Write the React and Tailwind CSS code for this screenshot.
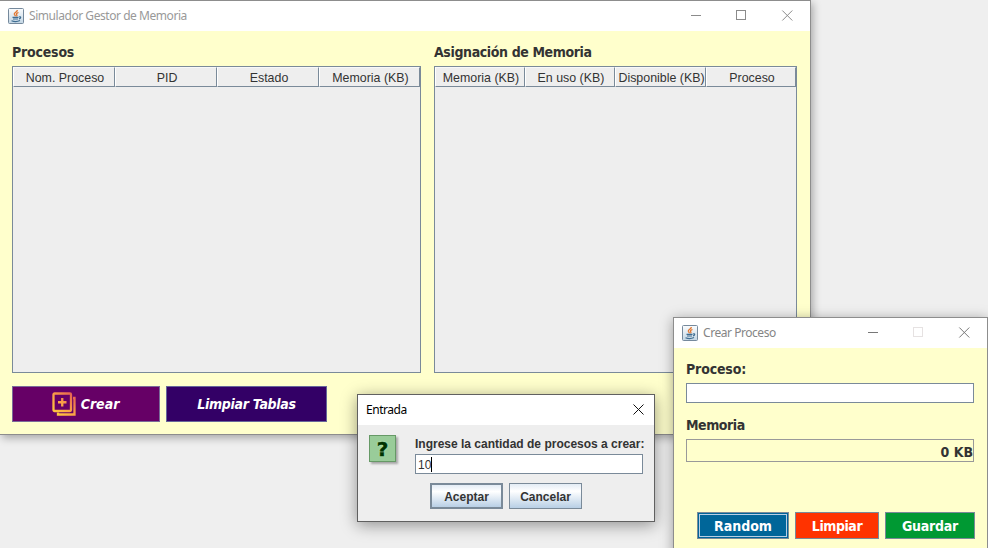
import React from "react";

const tahoma = "font-['DejaVu_Sans_Condensed','DejaVu_Sans',sans-serif] font-bold whitespace-nowrap";
const segoe = "font-['Noto_Sans','Open_Sans',sans-serif] whitespace-nowrap";
const arial = "font-['Liberation_Sans',Arial,sans-serif] whitespace-nowrap";

function JavaIcon() {
  return (
    <svg width="16" height="16" viewBox="0 0 16 16" className="-mt-px shrink-0">
      <defs>
        <linearGradient id="tile" x1="0" y1="0" x2="0" y2="1">
          <stop offset="0" stopColor="#fbfcfd" />
          <stop offset="1" stopColor="#c3d6e4" />
        </linearGradient>
      </defs>
      <rect x="0.5" y="0.5" width="15" height="15" rx="1" fill="url(#tile)" stroke="#75899c" />
      <path d="M9.3 2C9.6 4 6 4.600 6.300 6.200C6.500 7 7.300 7.400 7.400 8.200M10.500 4.500C8.500 5.100 8 6 8.800 7C9.200 7.500 8.900 8 8.500 8.400" fill="none" stroke="#e2762f" strokeWidth="1.300" />
      <path d="M4.500 9.300H10.500M5 11H10M11 9C13.300 8.200 13.200 10.500 11 10.900M3.500 12.700C6 13.700 10 13.500 12 12.500" fill="none" stroke="#3f6d91" strokeWidth="1.200" />
    </svg>
  );
}

function Controls({ dimMax, color }) {
  return (
    <svg width="103" height="12" viewBox="0 0 103 12" fill="none" stroke={color} className="shrink-0">
      <path d="M0 5.500H10" />
      <rect x="45.500" y="0.500" width="9" height="9" stroke={dimMax ? "#e6e2e2" : color} />
      <path d="M91.300 0.500L101.300 10.500M101.300 0.500L91.300 10.500" />
    </svg>
  );
}

function Table({ columns, grid, width }) {
  return (
    <div className={`h-[307px] border border-[#7a8a99] bg-[#eeeeee] ${width}`}>
      <div className={`grid h-[20px] ${grid}`}>
        {columns.map((c) => (
          <div
            key={c}
            className={`flex items-center justify-center overflow-hidden border-t border-r border-b border-l border-t-[#f8f8f8] border-l-[#ffffff] border-r-[#7a8a99] border-b-[#7a8a99] pt-px pl-[2px] text-[12.4px] leading-4 text-[#333333] ${arial}`}
          >
            {c}
          </div>
        ))}
      </div>
    </div>
  );
}

function MainWindow() {
  return (
    <section className="absolute top-0 left-0 h-[435px] w-[811px] border-t border-r border-b border-[#8d8d8d] bg-[#ffffcc] shadow-[2px_3px_8px_rgba(0,0,0,0.3)]">
      <header className="flex h-[30px] items-center bg-white pl-2">
        <JavaIcon />
        <h1 className={`ml-[5px] flex-1 text-[12px] leading-4 tracking-[-0.45px] text-[#999999] ${segoe}`}>Simulador Gestor de Memoria</h1>
        <div className="mr-[16px]"><Controls color="#8b8b8b" /></div>
      </header>
      <div className="flex gap-[13px] pt-[11px] pl-3">
        <div>
          <h2 className={`mb-[4px] text-[14px] leading-5 tracking-[-0.2px] text-[#333333] ${tahoma}`}>Procesos</h2>
          <Table width="w-[409px]" grid="grid-cols-[102px_102px_102px_101px]" columns={["Nom. Proceso", "PID", "Estado", "Memoria (KB)"]} />
        </div>
        <div>
          <h2 className={`mb-[4px] text-[14px] leading-5 tracking-[-0.38px] text-[#333333] ${tahoma}`}>Asignación de Memoria</h2>
          <Table width="w-[363px]" grid="grid-cols-[90px_90px_91px_90px]" columns={["Memoria (KB)", "En uso (KB)", "Disponible (KB)", "Proceso"]} />
        </div>
      </div>
      <div className="mt-[13px] flex gap-[6px] pl-3">
        <button className={`flex h-9 w-[148px] items-center justify-center gap-[5px] border border-[#7a6a99] bg-[#660066] pt-px text-[14px] text-white italic ${tahoma}`}>
          <svg width="24" height="24" viewBox="0 0 24 24" fill="none" stroke="url(#flame)" strokeWidth="2.300" className="-mt-px -ml-px">
            <defs>
              <linearGradient id="flame" gradientUnits="userSpaceOnUse" x1="2" y1="22" x2="20" y2="2">
                <stop offset="0" stopColor="#ffcb3d" />
                <stop offset="0.500" stopColor="#fba247" />
                <stop offset="1" stopColor="#e66352" />
              </linearGradient>
            </defs>
            <rect x="1.500" y="1.500" width="17.500" height="17.500" rx="1" />
            <path d="M10.250 6V14.500M6 10.250H14.500M21 6H22.500V22.500H6V20.500" />
          </svg>
          <span>Crear</span>
        </button>
        <button className={`h-9 w-[161px] border border-[#66669a] bg-[#330066] pt-px text-[14px] tracking-[-0.3px] text-white italic ${tahoma}`}>Limpiar Tablas</button>
      </div>
    </section>
  );
}

function CreateWindow() {
  return (
    <section className="absolute top-[317px] left-[673px] h-[240px] w-[315px] border border-[#8d8d8d] bg-[#ffffcc] shadow-[0_2px_12px_rgba(0,0,0,0.35)]">
      <header className="flex h-[30px] items-center bg-white pl-2">
        <JavaIcon />
        <h1 className={`ml-[5px] flex-1 text-[12px] leading-4 tracking-[-0.45px] text-[#858585] ${segoe}`}>Crear Proceso</h1>
        <div className="mr-[16px]"><Controls dimMax color="#777777" /></div>
      </header>
      <div className="pt-[11px] pr-3 pl-3">
        <label className={`block text-[14px] leading-5 tracking-[-0.15px] text-[#333333] ${tahoma}`}>Proceso:</label>
        <div className="mt-[4px] h-5 w-[288px] border border-[#7a8a99] bg-white" />
        <label className={`mt-[12px] block text-[14px] leading-5 tracking-[-0.45px] text-[#333333] ${tahoma}`}>Memoria</label>
        <div className={`mt-[4px] h-[23px] w-[288px] border border-[#999999] pt-[2px] text-right text-[14px] leading-5 text-[#333333] ${tahoma}`}>0 KB</div>
        <div className={`mt-[50px] ml-[11px] flex gap-[6px] text-[14px] text-white ${tahoma}`}>
          <button className="h-[27px] w-[92px] border border-[#7a8a99] bg-[#006699] p-px">
            <span className="flex h-full items-center justify-center border border-[#b8cfe5] pt-px">Random</span>
          </button>
          <button className="h-[27px] w-[84px] border border-[#7a8a99] bg-[#ff3300] pt-px tracking-[-0.45px]">Limpiar</button>
          <button className="h-[27px] w-[90px] border border-[#7a8a99] bg-[#009933] pt-px tracking-[-0.25px]">Guardar</button>
        </div>
      </div>
    </section>
  );
}

function InputDialog() {
  return (
    <section className="absolute top-[394px] left-[357px] h-[128px] w-[298px] border border-[#606060] bg-[#eeeeee] shadow-[0_3px_15px_rgba(0,0,0,0.4)]">
      <header className="flex h-[30px] items-center justify-between bg-white pr-[10px] pl-2">
        <h1 className={`text-[12px] leading-4 tracking-[-0.45px] text-black ${segoe}`}>Entrada</h1>
        <svg width="11" height="11" viewBox="0 0 11 11" fill="none" stroke="#111111" className="-mt-[2px]"><path d="M0.500 0.500L10.500 10.500M10.500 0.500L0.500 10.500" /></svg>
      </header>
      <div className="flex gap-[19px] pt-[10px] pl-[11px]">
        <div className="flex h-[27px] w-[27px] items-center justify-center border border-[#669966] bg-[#99cc99] shadow-[2px_2px_2px_rgba(0,0,0,0.3)]">
          <span className="font-['DejaVu_Sans',sans-serif] text-[20px] leading-none font-bold text-[#003300] [-webkit-text-stroke:0.5px_#003300] [text-shadow:0_0_2px_#ccffcc]">?</span>
        </div>
        <div className={arial}>
          <p className="text-[12px] leading-[18px] font-bold text-[#333333]">Ingrese la cantidad de procesos a crear:</p>
          <div className="mt-px flex h-5 w-[228px] items-center border border-[#7a8a99] bg-white pt-px pl-[2px] text-[12px] text-[#333333]">
            <span>10</span><span className="h-[15px] w-px bg-black" />
          </div>
        </div>
      </div>
      <div className={`mt-[9px] ml-[72px] flex gap-[6px] text-[12px] font-bold text-[#333333] ${arial}`}>
        <button className="h-[26px] w-[73px] border-2 border-[#7a8a99] bg-linear-to-b from-[#e3ecf5] via-white via-30% to-[#b8cfe5] pt-px">Aceptar</button>
        <button className="h-[26px] w-[73px] border border-[#7a8a99] bg-linear-to-b from-[#e3ecf5] via-white via-30% to-[#b8cfe5] pt-px">Cancelar</button>
      </div>
    </section>
  );
}

export default function App() {
  return (
    <main className="relative h-[548px] w-[988px] overflow-hidden bg-[#efefef]">
      <MainWindow />
      <CreateWindow />
      <InputDialog />
    </main>
  );
}
